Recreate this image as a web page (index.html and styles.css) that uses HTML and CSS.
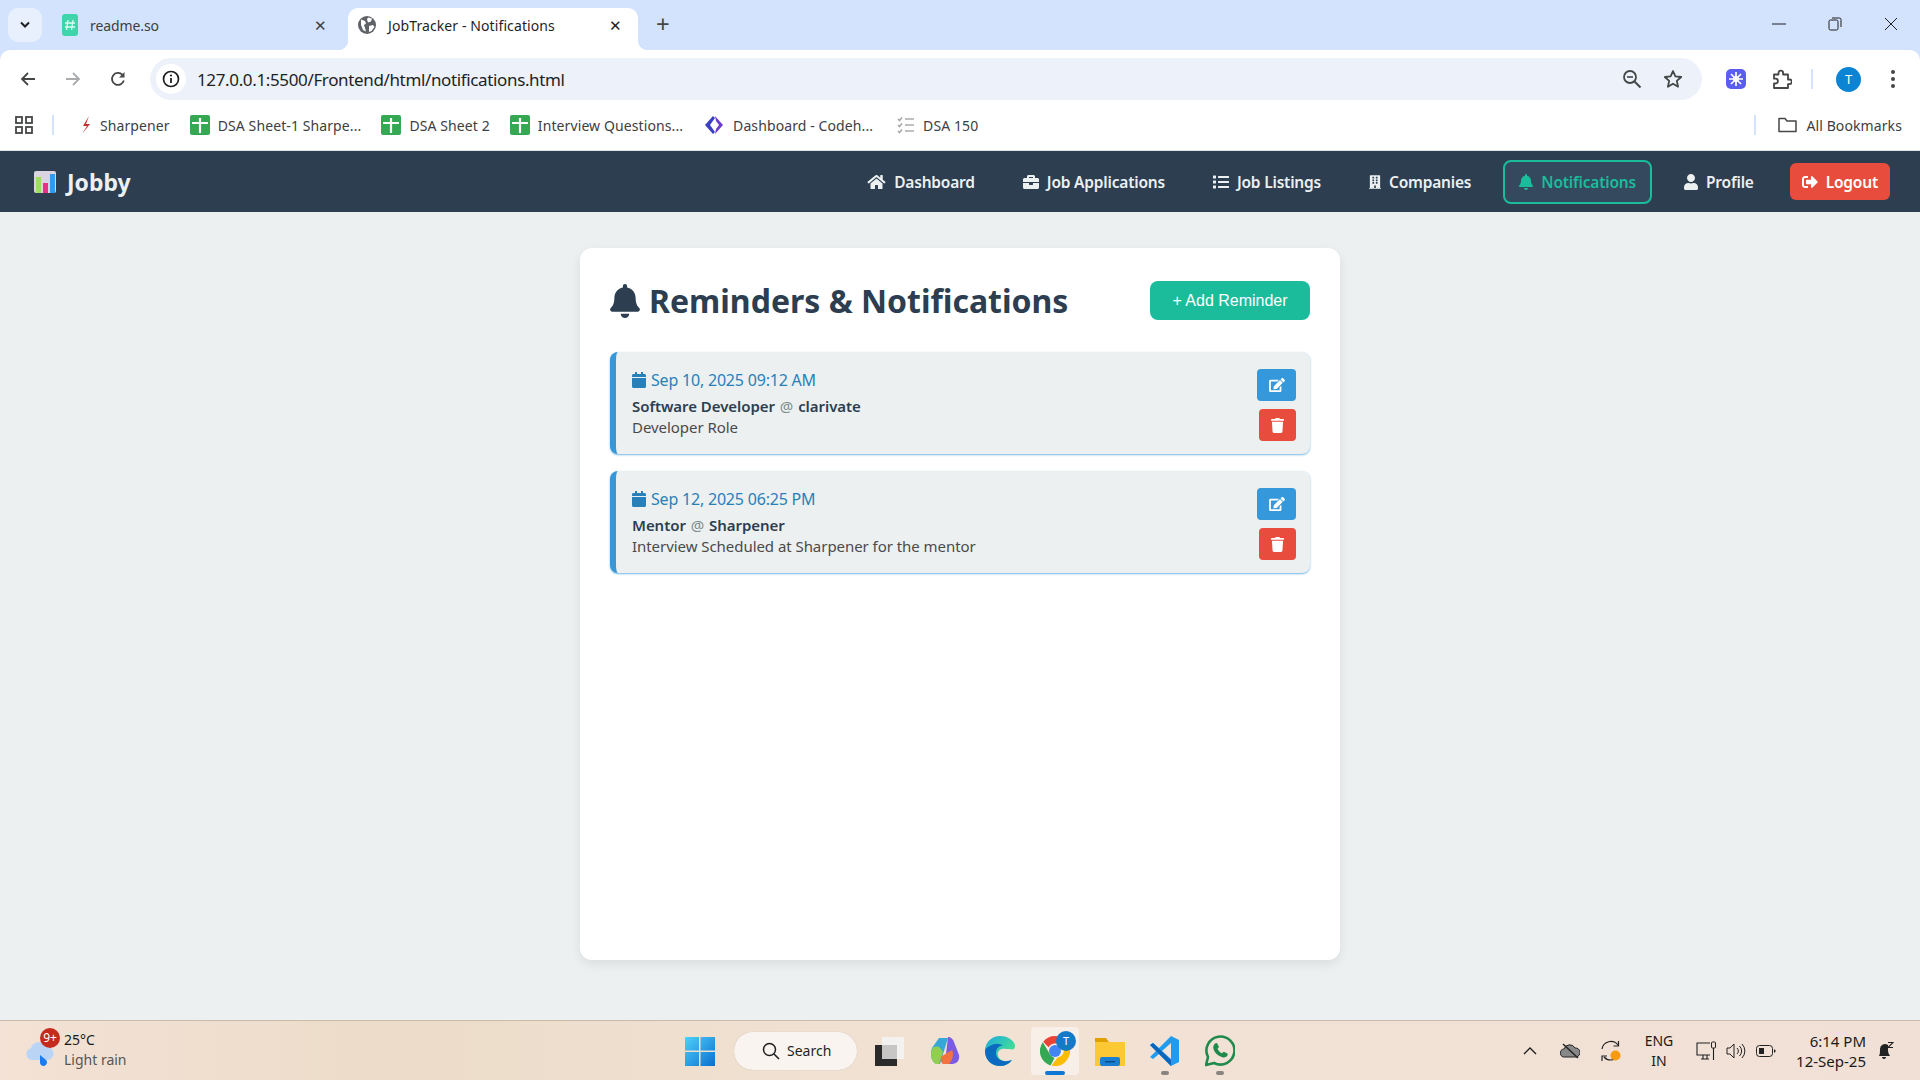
FILE: index.html
```html
<!DOCTYPE html>
<html lang="en">
<head>
    <meta charset="UTF-8">
    <title>JobTracker - Notifications</title>
    <link rel="stylesheet" href="styles.css">
</head>
<body>
    <svg class="defs" width="0" height="0">
        <symbol id="fa-bell" viewBox="0 0 448 512"><path d="M224 512c35.32 0 63.97-28.65 63.97-64H160.03c0 35.35 28.65 64 63.97 64zm215.39-149.71c-19.32-20.76-55.47-51.99-55.47-154.29 0-77.7-54.48-139.9-127.94-155.16V32c0-17.67-14.32-32-31.98-32s-31.98 14.33-31.98 32v20.84C118.56 68.1 64.08 130.3 64.08 208c0 102.3-36.15 133.53-55.47 154.29-6 6.45-8.66 14.16-8.61 21.71.11 16.4 12.98 32 32.1 32h383.8c19.12 0 32-15.6 32.1-32 .05-7.55-2.61-15.27-8.61-21.71z"/></symbol>
        <symbol id="fa-home" viewBox="0 0 576 512"><path d="M280.37 148.26L96 300.11V464a16 16 0 0 0 16 16l112.06-.29a16 16 0 0 0 15.92-16V368a16 16 0 0 1 16-16h64a16 16 0 0 1 16 16v95.64a16 16 0 0 0 16 16.05L464 480a16 16 0 0 0 16-16V300L295.67 148.26a12.19 12.19 0 0 0-15.3 0zM571.6 251.47L488 182.56V44.05a12 12 0 0 0-12-12h-56a12 12 0 0 0-12 12v72.61L318.47 43a48 48 0 0 0-61 0L4.34 251.47a12 12 0 0 0-1.6 16.9l25.5 31A12 12 0 0 0 45.15 301l235.22-193.74a12.19 12.19 0 0 1 15.3 0L530.9 301a12 12 0 0 0 16.9-1.6l25.5-31a12 12 0 0 0-1.7-16.93z"/></symbol>
        <symbol id="fa-briefcase" viewBox="0 0 512 512"><path d="M320 336c0 8.84-7.16 16-16 16h-96c-8.84 0-16-7.16-16-16v-48H0v144c0 25.6 22.4 48 48 48h416c25.6 0 48-22.4 48-48V288H320v48zm144-208h-80V80c0-25.6-22.4-48-48-48H176c-25.6 0-48 22.4-48 48v48H48c-25.6 0-48 22.4-48 48v80h512v-80c0-25.6-22.4-48-48-48zm-144 0H192V96h128v32z"/></symbol>
        <symbol id="fa-list" viewBox="0 0 512 512"><path d="M80 368H16a16 16 0 0 0-16 16v64a16 16 0 0 0 16 16h64a16 16 0 0 0 16-16v-64a16 16 0 0 0-16-16zm0-320H16A16 16 0 0 0 0 64v64a16 16 0 0 0 16 16h64a16 16 0 0 0 16-16V64a16 16 0 0 0-16-16zm0 160H16a16 16 0 0 0-16 16v64a16 16 0 0 0 16 16h64a16 16 0 0 0 16-16v-64a16 16 0 0 0-16-16zm416 176H176a16 16 0 0 0-16 16v32a16 16 0 0 0 16 16h320a16 16 0 0 0 16-16v-32a16 16 0 0 0-16-16zm0-320H176a16 16 0 0 0-16 16v32a16 16 0 0 0 16 16h320a16 16 0 0 0 16-16V80a16 16 0 0 0-16-16zm0 160H176a16 16 0 0 0-16 16v32a16 16 0 0 0 16 16h320a16 16 0 0 0 16-16v-32a16 16 0 0 0-16-16z"/></symbol>
        <symbol id="fa-building" viewBox="0 0 448 512"><path d="M436 480h-20V24c0-13.255-10.745-24-24-24H56C42.745 0 32 10.745 32 24v456H12c-6.627 0-12 5.373-12 12v20h448v-20c0-6.627-5.373-12-12-12zM128 76c0-6.627 5.373-12 12-12h40c6.627 0 12 5.373 12 12v40c0 6.627-5.373 12-12 12h-40c-6.627 0-12-5.373-12-12V76zm0 96c0-6.627 5.373-12 12-12h40c6.627 0 12 5.373 12 12v40c0 6.627-5.373 12-12 12h-40c-6.627 0-12-5.373-12-12v-40zm52 148h-40c-6.627 0-12-5.373-12-12v-40c0-6.627 5.373-12 12-12h40c6.627 0 12 5.373 12 12v40c0 6.627-5.373 12-12 12zm76 160h-64v-84c0-6.627 5.373-12 12-12h40c6.627 0 12 5.373 12 12v84zm64-172c0 6.627-5.373 12-12 12h-40c-6.627 0-12-5.373-12-12v-40c0-6.627 5.373-12 12-12h40c6.627 0 12 5.373 12 12v40zm0-96c0 6.627-5.373 12-12 12h-40c-6.627 0-12-5.373-12-12v-40c0-6.627 5.373-12 12-12h40c6.627 0 12 5.373 12 12v40zm0-96c0 6.627-5.373 12-12 12h-40c-6.627 0-12-5.373-12-12V76c0-6.627 5.373-12 12-12h40c6.627 0 12 5.373 12 12v40z"/></symbol>
        <symbol id="fa-user" viewBox="0 0 448 512"><path d="M224 256c70.7 0 128-57.3 128-128S294.7 0 224 0 96 57.3 96 128s57.3 128 128 128zm89.6 32h-16.7c-22.2 10.2-46.9 16-72.9 16s-50.6-5.8-72.9-16h-16.7C60.2 288 0 348.2 0 422.4V464c0 26.5 21.5 48 48 48h352c26.5 0 48-21.5 48-48v-41.6c0-74.2-60.2-134.4-134.4-134.4z"/></symbol>
        <symbol id="fa-logout" viewBox="0 0 512 512"><path d="M497 273L329 441c-15 15-41 4.5-41-17v-96H152c-13.3 0-24-10.7-24-24v-96c0-13.3 10.7-24 24-24h136V88c0-21.4 25.9-32 41-17l168 168c9.3 9.4 9.3 24.6 0 34zM192 436v-40c0-6.6-5.4-12-12-12H96c-17.7 0-32-14.3-32-32V160c0-17.7 14.3-32 32-32h84c6.6 0 12-5.4 12-12V76c0-6.6-5.4-12-12-12H96c-53 0-96 43-96 96v192c0 53 43 96 96 96h84c6.6 0 12-5.4 12-12z"/></symbol>
        <symbol id="fa-calendar" viewBox="0 0 448 512"><path d="M12 192h424c6.6 0 12 5.4 12 12v260c0 26.5-21.5 48-48 48H48c-26.5 0-48-21.5-48-48V204c0-6.6 5.4-12 12-12zm436-44v-36c0-26.5-21.5-48-48-48h-48V12c0-6.6-5.4-12-12-12h-40c-6.6 0-12 5.4-12 12v52H160V12c0-6.6-5.4-12-12-12h-40c-6.6 0-12 5.4-12 12v52H48C21.5 64 0 85.5 0 112v36c0 6.6 5.4 12 12 12h424c6.6 0 12-5.4 12-12z"/></symbol>
        <symbol id="fa-edit" viewBox="0 0 576 512"><path d="M402.6 83.2l90.2 90.2c3.8 3.8 3.8 10 0 13.8L274.4 405.6l-92.8 10.3c-12.4 1.4-22.9-9.1-21.5-21.5l10.3-92.8L388.8 83.2c3.8-3.8 10-3.8 13.8 0zm162-22.9l-48.8-48.8c-15.2-15.2-39.9-15.2-55.2 0l-35.4 35.4c-3.8 3.8-3.8 10 0 13.8l90.2 90.2c3.8 3.8 10 3.8 13.8 0l35.4-35.4c15.2-15.3 15.2-40 0-55.2zM384 346.2V448H64V128h229.8c3.2 0 6.2-1.3 8.5-3.5l40-40c7.6-7.6 2.2-20.5-8.5-20.5H48C21.5 64 0 85.5 0 112v352c0 26.5 21.5 48 48 48h352c26.5 0 48-21.5 48-48V306.2c0-10.7-12.9-16-20.5-8.5l-40 40c-2.2 2.3-3.5 5.3-3.5 8.5z"/></symbol>
        <symbol id="fa-trash" viewBox="0 0 448 512"><path d="M432 32H312l-9.4-18.7A24 24 0 0 0 281.1 0H166.8a23.72 23.72 0 0 0-21.4 13.3L136 32H16A16 16 0 0 0 0 48v32a16 16 0 0 0 16 16h416a16 16 0 0 0 16-16V48a16 16 0 0 0-16-16zM53.2 467a48 48 0 0 0 47.9 45h245.8a48 48 0 0 0 47.9-45L416 128H32z"/></symbol>
        <symbol id="sheet" viewBox="0 0 20 20"><rect width="20" height="20" rx="2" fill="#34a853"/><path d="M2 8h16M10 3v15" stroke="#fff" stroke-width="2.2" fill="none"/></symbol>
    </svg>

    <div class="browser-top">
        <div class="tabstrip">
            <div class="tab-menu"><svg width="12" height="8" viewBox="0 0 12 8"><path d="M2 1.500l4 4 4-4" stroke="#1f1f1f" stroke-width="2" fill="none"/></svg></div>
            <div class="tab tab-idle">
                <svg class="tab-icon" width="16" height="22" viewBox="0 0 16 22"><rect width="16" height="22" rx="3" fill="#3fd5ab"/><path d="M6 6l-1.500 10M11 6L9.500 16M3 9h10M3 13h10" stroke="#d9fff2" stroke-width="1.300"/></svg>
                <span class="tab-title">readme.so</span>
                <span class="tab-close">✕</span>
            </div>
            <div class="tab tab-active">
                <svg class="tab-icon" width="18" height="18" viewBox="0 0 18 18"><circle cx="9" cy="9" r="9" fill="#5f6368"/><path d="M3 3.500l4 1.500 1 2.500-2 1.500 1 3 1 3.500-3-1.500-2-5zM10 1.500l4 1-1 3-3 1-1-3zM11 10l4-1 1.500 2-3 4-2.500 1z" fill="#fff"/></svg>
                <span class="tab-title">JobTracker - Notifications</span>
                <span class="tab-close">✕</span>
            </div>
            <span class="tab-new">+</span>
            <div class="win-controls">
                <svg width="14" height="14" viewBox="0 0 14 14"><path d="M0 7h14" stroke="#1f1f1f" stroke-width="1"/></svg>
                <svg width="14" height="14" viewBox="0 0 14 14"><rect x="1" y="3" width="9" height="10" rx="1.500" fill="none" stroke="#1f1f1f"/><path d="M4 1h7.500a1.500 1.500 0 0 1 1.500 1.500V10" fill="none" stroke="#1f1f1f"/></svg>
                <svg width="14" height="14" viewBox="0 0 14 14"><path d="M1 1l12 12M13 1L1 13" stroke="#1f1f1f"/></svg>
            </div>
        </div>

        <div class="toolbar">
            <svg class="tool" width="16" height="16" viewBox="0 0 16 16"><path d="M15 8H2M8 2L2 8l6 6" fill="none" stroke="#444746" stroke-width="1.800"/></svg>
            <svg class="tool" width="16" height="16" viewBox="0 0 16 16"><path d="M1 8h13M8 2l6 6-6 6" fill="none" stroke="#a9abad" stroke-width="1.800"/></svg>
            <svg class="tool tool-last" width="16" height="16" viewBox="0 0 16 16"><path d="M13.800 9.500A6 6 0 1 1 12.300 3.700" fill="none" stroke="#444746" stroke-width="1.800"/><path d="M14.500 1v5.500H9z" fill="#444746"/></svg>
            <div class="omnibox">
                <span class="site-info"><svg width="18" height="18" viewBox="0 0 18 18"><circle cx="9" cy="9" r="7.500" fill="none" stroke="#1f1f1f" stroke-width="1.700"/><path d="M9 8v5" stroke="#1f1f1f" stroke-width="1.800"/><circle cx="9" cy="5.500" r="1.100" fill="#1f1f1f"/></svg></span>
                <span class="url">127.0.0.1:5500/Frontend/html/notifications.html</span>
                <svg class="zoom-out" width="20" height="20" viewBox="0 0 20 20"><circle cx="8" cy="8" r="6" fill="none" stroke="#444746" stroke-width="1.800"/><path d="M5 8h6" stroke="#444746" stroke-width="1.600"/><path d="M12.500 12.500l6 6" stroke="#444746" stroke-width="2"/></svg>
                <svg class="star" width="20" height="20" viewBox="0 0 20 20"><path d="M10 2l2.400 5.400 5.800.6-4.400 3.900 1.300 5.800L10 14.700l-5.100 3 1.300-5.800L1.800 8l5.800-.6z" fill="none" stroke="#444746" stroke-width="1.800" stroke-linejoin="round"/></svg>
            </div>
            <svg class="ext" width="20" height="20" viewBox="0 0 20 20"><rect width="20" height="20" rx="5" fill="#5b5ef0"/><path d="M10 3v14M3 10h14M5 5l10 10M15 5L5 15" stroke="#fff" stroke-width="1.700"/><circle cx="10" cy="10" r="3" fill="#fff"/></svg>
            <svg class="puzzle" width="20" height="20" viewBox="0 0 20 20"><path d="M2 5.500h4.500V4a2.300 2.300 0 0 1 4.600 0v1.500H16v5h1.500a2.300 2.300 0 0 1 0 4.600H16V19H2v-4.500h1.500a2.400 2.400 0 0 0 0-4.800H2z" fill="none" stroke="#444746" stroke-width="1.800" stroke-linejoin="round"/></svg>
            <span class="tool-sep"></span>
            <span class="avatar">T</span>
            <svg class="dots" width="4" height="18" viewBox="0 0 4 18"><circle cx="2" cy="2" r="2" fill="#444746"/><circle cx="2" cy="9" r="2" fill="#444746"/><circle cx="2" cy="16" r="2" fill="#444746"/></svg>
        </div>
    </div>

    <div class="bookmarks">
        <svg class="apps" width="18" height="18" viewBox="0 0 18 18"><g fill="none" stroke="#444746" stroke-width="1.800"><rect x="1" y="1" width="6" height="6"/><rect x="11" y="1" width="6" height="6"/><rect x="1" y="11" width="6" height="6"/><rect x="11" y="11" width="6" height="6"/></g></svg>
        <span class="bm-sep"></span>
        <span class="bm bm-sharp"><svg width="12" height="20" viewBox="0 0 12 20"><path d="M9 1L3 11h4L2 19l8-10H6z" fill="#c62f2f"/></svg>Sharpener</span>
        <span class="bm"><svg width="20" height="20"><use href="#sheet"/></svg>DSA Sheet-1 Sharpe...</span>
        <span class="bm"><svg width="20" height="20"><use href="#sheet"/></svg>DSA Sheet 2</span>
        <span class="bm"><svg width="20" height="20"><use href="#sheet"/></svg>Interview Questions...</span>
        <span class="bm bm-wide"><svg width="22" height="20" viewBox="0 0 22 20"><path d="M10 1L2 10l8 9 2-2-5-7 5-7z" fill="#3b3fc4"/><path d="M12 1l8 9-8 9 1-5 3-4-3-4z" fill="#6d3bd0"/></svg>Dashboard - Codeh...</span>
        <span class="bm"><svg width="18" height="18" viewBox="0 0 18 18"><path d="M1 3l1.500 1.500L5 1.500M1 9l1.500 1.500L5 7.500M1 15l1.500 1.500L5 13.500M8 3h9M8 9h9M8 15h9" fill="none" stroke="#aaa" stroke-width="1.700"/></svg>DSA 150</span>
        <span class="bm-all">
            <span class="bm-sep"></span>
            <svg width="19" height="16" viewBox="0 0 19 16"><path d="M1 14.500V1.500h6l2 2.500h9v10.500z" fill="none" stroke="#444746" stroke-width="1.500" stroke-linejoin="round"/></svg>
            All Bookmarks
        </span>
    </div>

    <nav class="navbar">
        <a class="logo">
            <svg width="22" height="22" viewBox="0 0 22 22"><rect width="22" height="22" rx="2" fill="#d9d4e0"/><rect x="2" y="6" width="5" height="16" fill="#9adf62"/><rect x="9" y="12" width="5" height="10" fill="#e9327f"/><rect x="16" y="3" width="5" height="19" fill="#2f9cf0"/></svg>
            Jobby
        </a>
        <div class="nav-links">
            <a class="nav-link"><svg class="ico-home"><use href="#fa-home"/></svg>Dashboard</a>
            <a class="nav-link"><svg class="ico-brief"><use href="#fa-briefcase"/></svg>Job Applications</a>
            <a class="nav-link"><svg class="ico-brief"><use href="#fa-list"/></svg>Job Listings</a>
            <a class="nav-link"><svg class="ico-build"><use href="#fa-building"/></svg>Companies</a>
            <a class="nav-link active"><svg class="ico-narrow"><use href="#fa-bell"/></svg>Notifications</a>
            <a class="nav-link"><svg class="ico-narrow"><use href="#fa-user"/></svg>Profile</a>
            <a class="logout"><svg class="ico-brief"><use href="#fa-logout"/></svg>Logout</a>
        </div>
    </nav>

    <main class="page">
        <section class="card">
            <header class="card-head">
                <h1><svg class="h1-bell"><use href="#fa-bell"/></svg>Reminders &amp; Notifications</h1>
                <button class="add-btn">+ Add Reminder</button>
            </header>

            <div class="reminder">
                <div class="rem-body">
                    <div class="rem-date"><svg class="ico-cal"><use href="#fa-calendar"/></svg>Sep 10, 2025 09:12 AM</div>
                    <div class="rem-job"><strong>Software Developer</strong> <span class="at">@</span> <strong>clarivate</strong></div>
                    <div class="rem-note">Developer Role</div>
                </div>
                <div class="rem-actions">
                    <button class="icon-btn edit"><svg class="ico-edit"><use href="#fa-edit"/></svg></button>
                    <button class="icon-btn del"><svg class="ico-del"><use href="#fa-trash"/></svg></button>
                </div>
            </div>

            <div class="reminder">
                <div class="rem-body">
                    <div class="rem-date"><svg class="ico-cal"><use href="#fa-calendar"/></svg>Sep 12, 2025 06:25 PM</div>
                    <div class="rem-job"><strong>Mentor</strong> <span class="at">@</span> <strong>Sharpener</strong></div>
                    <div class="rem-note">Interview Scheduled at Sharpener for the mentor</div>
                </div>
                <div class="rem-actions">
                    <button class="icon-btn edit"><svg class="ico-edit"><use href="#fa-edit"/></svg></button>
                    <button class="icon-btn del"><svg class="ico-del"><use href="#fa-trash"/></svg></button>
                </div>
            </div>
        </section>
    </main>

    <footer class="taskbar">
        <div class="tb-weather">
            <span class="weather-icon">
                <svg width="34" height="32" viewBox="0 0 32 32"><path d="M8 25a6 6 0 0 1-1-11.800A8 8 0 0 1 22 12a6.500 6.500 0 0 1 2 13z" fill="#b9d4f5"/><path d="M16 20l6 5a3.500 3.500 0 1 1-6 2z" fill="#1a7cf0"/></svg>
                <span class="badge">9+</span>
            </span>
            <div class="weather-text"><div class="temp">25°C</div><div class="cond">Light rain</div></div>
        </div>

        <div class="tb-center">
            <svg width="30" height="30" viewBox="0 0 30 30"><defs><linearGradient id="winblue" x1="0" y1="0" x2="1" y2="1"><stop offset="0" stop-color="#4fd0fb"/><stop offset="1" stop-color="#0a6fd0"/></linearGradient></defs><path d="M0 1h14v13.500H0zM15.500 1H30v13.500H15.500zM0 16h14v14H0zM15.500 16H30v14H15.500z" fill="url(#winblue)"/></svg>
            <div class="tb-search">
                <svg width="18" height="18" viewBox="0 0 18 18"><circle cx="7.500" cy="7.500" r="6" fill="none" stroke="#1f1f1f" stroke-width="1.500"/><path d="M12 12l5 5" stroke="#1f1f1f" stroke-width="1.600"/></svg>
                <span>Search</span>
            </div>
            <svg width="30" height="30" viewBox="0 0 30 30"><rect x="7" y="1" width="22" height="22" fill="#f4f2f0"/><rect x="0" y="9" width="22" height="21" fill="#2a2a2a"/><rect x="7" y="9" width="15" height="14" fill="#c8c6c4"/></svg>
            <svg width="30" height="30" viewBox="0 0 30 30"><path d="M9 2h9l-4 13-4 13H6C1 25 0 18 2 12z" fill="#35a7d8"/><path d="M18 1c3 0 5 2 6 5l5 13c1 5-2 9-7 9h-9l3-10z" fill="#7b5be0"/><path d="M2 13c2-3 6-3 8-1l3 4-4 12H6C1 25 0 19 2 13z" fill="#8fd14f"/><path d="M12 20l10-6c2 3 1 10-3 14h-6c-3-2-3-5-1-8z" fill="#f37340"/></svg>
            <svg width="30" height="30" viewBox="0 0 30 30"><defs><linearGradient id="edgeg" x1="0" y1="0" x2="1" y2="1"><stop offset="0" stop-color="#1fa8e0"/><stop offset=".6" stop-color="#3cd8a0"/><stop offset="1" stop-color="#60e070"/></linearGradient></defs><path d="M15 0C6 0 0 7 0 15c0 9 7 15 15 15 5 0 9-2 12-6-6 3-13 1-14-5-1-4 3-7 8-6 5 0 9 2 9-3C30 5 23 0 15 0z" fill="url(#edgeg)"/><path d="M0 15c0 9 7 15 15 15 5 0 9-2 12-6-8 3-16 0-16-7 0-5 4-8 7-7-3-3-9-3-13 0-3 1-5 3-5 5z" fill="#0c6bc0"/></svg>
            <div class="tb-chrome">
                <svg width="30" height="30" viewBox="0 0 30 30"><path d="M15 0a15 15 0 0 1 13 7.500H15A7.500 7.500 0 0 0 8.500 11.300L3.200 5.800A15 15 0 0 1 15 0z" fill="#ea4335"/><path d="M2.800 6.200l6.700 11.300a7.500 7.500 0 0 0 5 4.400L10.500 29.400A15 15 0 0 1 2.800 6.200z" fill="#34a853"/><path d="M28.200 8A15 15 0 0 1 11.500 29.600l6.300-8.300A7.500 7.500 0 0 0 21 8z" fill="#fbbc04"/><circle cx="15" cy="15" r="6" fill="#4285f4"/></svg>
                <span class="chrome-badge">T</span>
                <span class="tb-ind tb-ind-active"></span>
            </div>
            <svg width="30" height="30" viewBox="0 0 30 30"><path d="M0 2h11l3 4h16v4H0z" fill="#e0a100"/><rect y="6" width="30" height="24" fill="#fcc934"/><rect x="5" y="21" width="20" height="9" rx="2" fill="#1a7fd0"/><rect x="10" y="25" width="10" height="1.500" fill="#0b4e8a"/></svg>
            <div class="tb-app">
                <svg width="30" height="32" viewBox="0 0 30 32"><path d="M21 1l8 4v22l-8 4-12-12-6 5-3-2 6-6-6-6 3-2 6 5z" fill="#1f9cf0"/><path d="M21 8L12 16l9 8z" fill="#f2e4d8"/><path d="M0 10l3-2 18 17v6L6 16z" fill="#0a66b8"/></svg>
                <span class="tb-ind"></span>
            </div>
            <div class="tb-app">
                <svg width="30" height="32" viewBox="0 0 30 32"><path d="M1 30l2-8a14 14 0 1 1 6 6z" fill="none" stroke="#1f8a4c" stroke-width="2.600" stroke-linejoin="round"/><path d="M10 8.500l2-.5 2 4-1.500 1.800c1 2 2.500 3.500 4.500 4.500l1.800-1.500 4 2-.5 2c-1 1.500-3 2-5 1.500-5-1.500-8-5-9-9-.3-2 .5-3.500 1.700-4.800z" fill="#1f8a4c"/></svg>
                <span class="tb-ind"></span>
            </div>
        </div>

        <div class="tb-tray">
            <svg class="tray-chevron" width="14" height="8" viewBox="0 0 14 8"><path d="M1 7l6-6 6 6" fill="none" stroke="#1f1f1f" stroke-width="1.400"/></svg>
            <svg class="tray-cloud" width="20" height="16" viewBox="0 0 20 16"><path d="M5 14a4 4 0 0 1-1-8 6 6 0 0 1 11-1 4.500 4.500 0 0 1 1 9z" fill="#888" stroke="#222"/><path d="M3 1l15 14" stroke="#222" stroke-width="1.500"/></svg>
            <svg class="tray-sync" width="22" height="22" viewBox="0 0 22 22"><path d="M2 9a9 9 0 0 1 16-4M19 13a9 9 0 0 1-8 7 9 9 0 0 1-7-3" fill="none" stroke="#222" stroke-width="1.200"/><path d="M18.500 1v5h-5M2 21v-5h5" fill="none" stroke="#222" stroke-width="1.200"/><circle cx="15.500" cy="15.500" r="5" fill="#f79a0e"/></svg>
            <div class="tray-lang"><div>ENG</div><div>IN</div></div>
            <svg class="tray-net" width="20" height="20" viewBox="0 0 20 20"><path d="M14 2H1v12h13M5 18h8M7 14v4M11 14v4" fill="none" stroke="#222" stroke-width="1.100"/><rect x="15.500" y="1" width="4" height="6" rx="1" fill="none" stroke="#222"/><path d="M17.500 7v12" stroke="#222" stroke-width="1.100"/></svg>
            <svg class="tray-vol" width="20" height="16" viewBox="0 0 20 16"><path d="M1 5h3l4-4v14l-4-4H1zM11 5a4 4 0 0 1 0 6M13.500 3a7 7 0 0 1 0 10M16 1a10 10 0 0 1 0 14" fill="none" stroke="#222"/></svg>
            <svg class="tray-bat" width="20" height="12" viewBox="0 0 20 12"><rect x=".5" y=".5" width="16" height="11" rx="3" fill="none" stroke="#222"/><rect x="3" y="3" width="5" height="6" fill="#222"/><path d="M18 4v4l2-2z" fill="#222"/></svg>
            <div class="tray-clock"><div>6:14 PM</div><div>12-Sep-25</div></div>
            <svg class="tray-bell" width="18" height="20" viewBox="0 0 18 20"><path d="M3 15c1-2 1-4 1-7a5 5 0 0 1 8-4v5c0 3 1 4 2 6z" fill="#222"/><path d="M6 16h4a2 2 0 0 1-4 0z" fill="#222"/><path d="M12 1.500h5l-5 5h5" fill="none" stroke="#222" stroke-width="1.100"/></svg>
        </div>
    </footer>
</body>
</html>
```

FILE: styles.css
```css
* {
    box-sizing: border-box;
}

html, body {
    margin: 0;
    height: 100%;
}

body {
    display: flex;
    flex-direction: column;
    height: 1080px;
    overflow: hidden;
    font-family: "Noto Sans", "Open Sans", sans-serif;
    background: #ecf0f1;
    color: #1f1f1f;
}

.defs {
    position: absolute;
}

/* browser chrome */
.browser-top {
    flex: none;
    background: #d3e3fd;
}

.tabstrip {
    height: 50px;
    display: flex;
    align-items: flex-start;
}

.tab-menu {
    width: 34px;
    height: 34px;
    margin: 8px 0 0 8px;
    border-radius: 10px;
    background: #e9f0fd;
    display: flex;
    align-items: center;
    justify-content: center;
}

.tab {
    height: 42px;
    margin-top: 8px;
    display: flex;
    align-items: center;
    font-size: 14px;
    color: #3c4043;
}

.tab-idle {
    width: 306px;
    padding: 0 18px 8px 20px;
    letter-spacing: -0.1px;
}

.tab-active {
    position: relative;
    width: 290px;
    padding: 0 12px 8px 10px;
    background: #fff;
    border-radius: 10px 10px 0 0;
    color: #1f1f1f;
    letter-spacing: 0.1px;
}

/* the little flares at the foot of the active tab */
.tab-active::before, .tab-active::after {
    content: "";
    position: absolute;
    bottom: 0;
    width: 10px;
    height: 10px;
}

.tab-active::before {
    left: -10px;
    background: radial-gradient(circle at 0 0, transparent 10px, #fff 10.5px);
}

.tab-active::after {
    right: -10px;
    background: radial-gradient(circle at 100% 0, transparent 10px, #fff 10.5px);
}

.tab-icon {
    margin-right: 12px;
    flex: none;
}

.tab-title {
    flex: 1;
}

.tab-close {
    font-size: 15px;
    width: 20px;
    text-align: center;
}

.tab-new {
    margin: 6px 0 0 18px;
    font-size: 24px;
    line-height: 36px;
    color: #444746;
}

.win-controls {
    margin-left: auto;
    display: flex;
    gap: 42px;
    padding: 17px 22px 0 0;
}

.toolbar {
    height: 50px;
    display: flex;
    align-items: center;
    background: #fff;
    border-radius: 10px 10px 0 0;
    padding: 8px 0 0 20px;
}

.tool {
    margin-right: 29px;
}

.tool-last {
    margin-right: 24px;
}

.omnibox {
    width: 1552px;
    height: 42px;
    border-radius: 21px;
    background: #ecf1fa;
    display: flex;
    align-items: center;
    padding-left: 6px;
}

.site-info {
    width: 30px;
    height: 30px;
    border-radius: 50%;
    background: #fff;
    display: flex;
    align-items: center;
    justify-content: center;
}

.url {
    margin-left: 11px;
    font-size: 17px;
    letter-spacing: -0.36px;
    flex: 1;
}

.zoom-out {
    margin-right: 21px;
}

.star {
    margin-right: 19px;
}

.ext {
    margin-left: 24px;
}

.puzzle {
    margin-left: 26px;
}

.tool-sep {
    width: 2px;
    height: 20px;
    background: #d3e3fd;
    margin: 0 23px 0 19px;
}

.avatar {
    width: 25px;
    height: 25px;
    border-radius: 50%;
    background: #0b84d4;
    color: #fff;
    font-size: 13px;
    text-align: center;
    line-height: 25px;
}

.dots {
    margin-left: 30px;
}

.bookmarks {
    height: 51px;
    flex: none;
    display: flex;
    align-items: center;
    background: #fff;
    padding-left: 15px;
    border-bottom: 1px solid #dfe1e5;
    font-size: 14px;
    letter-spacing: 0.1px;
    color: #3c4043;
}

.bm-sep {
    width: 2px;
    height: 20px;
    background: #d3e3fd;
    margin: 0 17px 0 19px;
}

.bm {
    display: flex;
    align-items: center;
    gap: 8px;
    margin-right: 20px;
}

.bm-wide {
    margin-right: 24px;
}

.bm-sharp {
    margin-left: 9px;
}

.bm-all {
    margin-left: auto;
    display: flex;
    align-items: center;
    padding-right: 18px;
    gap: 9px;
}

.bm-all .bm-sep {
    margin: 0 13px 0 0;
}

/* app navbar */
.navbar {
    height: 61px;
    flex: none;
    display: flex;
    align-items: center;
    justify-content: space-between;
    padding: 0 30px 0 34px;
    background: #2c3e50;
    color: #ecf0f1;
}

.logo {
    display: flex;
    align-items: center;
    gap: 11px;
    font-size: 23px;
    font-weight: 700;
}

.nav-links {
    display: flex;
    align-items: center;
    gap: 16px;
}

.nav-link {
    display: flex;
    align-items: center;
    gap: 8px;
    padding: 8px 14px;
    height: 44px;
    border: 2px solid transparent;
    border-radius: 8px;
    font-size: 15.500px;
    font-weight: 600;
    letter-spacing: -0.2px;
}

.nav-link svg, .logout svg {
    fill: currentColor;
    height: 16px;
}

.ico-home {
    width: 19px;
}

.ico-brief {
    width: 16px;
}

.ico-narrow {
    width: 14px;
}

.ico-build {
    width: 12px;
}

.nav-link.active {
    color: #1abc9c;
    border-color: #1abc9c;
    background: #34495e;
}

.logout {
    display: flex;
    align-items: center;
    gap: 8px;
    height: 37px;
    margin-left: 4px;
    padding: 0 12px;
    border-radius: 6px;
    background: #e74c3c;
    color: #fff;
    font-size: 15.500px;
    font-weight: 600;
    letter-spacing: -0.2px;
}

/* page */
.page {
    flex: 1;
    display: flex;
    justify-content: center;
    padding-top: 36px;
}

.card {
    width: 760px;
    height: 712px;
    padding: 33px 30px;
    background: #fff;
    border-radius: 12px;
    box-shadow: 0 4px 12px rgba(0, 0, 0, 0.08);
}

.card-head {
    display: flex;
    align-items: center;
    justify-content: space-between;
    margin-bottom: 32px;
    height: 39px;
}

h1 {
    margin: 0;
    display: flex;
    align-items: center;
    gap: 9px;
    font-size: 32px;
    font-weight: 700;
    color: #2c3e50;
}

.h1-bell {
    width: 30px;
    height: 34px;
    fill: #2c3e50;
}

.add-btn {
    width: 160px;
    height: 39px;
    border: 0;
    border-radius: 8px;
    background: #1abc9c;
    color: #fff;
    font-family: "Liberation Sans", sans-serif;
    font-size: 16px;
}

.reminder {
    height: 102px;
    margin-bottom: 17px;
    display: flex;
    justify-content: space-between;
    background: #ecf0f1;
    border-left: 6px solid #3498db;
    border-radius: 8px;
    box-shadow: 0 1px 2px rgba(52, 152, 219, 0.7);
    padding: 17px 14px 0 16px;
}

.rem-date {
    display: flex;
    align-items: center;
    gap: 5px;
    font-size: 16px;
    line-height: 22px;
    letter-spacing: -0.2px;
    color: #2980b9;
}

.ico-cal {
    width: 14px;
    height: 16px;
    fill: #2980b9;
}

.rem-job {
    margin-top: 5px;
    font-size: 15px;
    line-height: 21px;
    letter-spacing: -0.05px;
    color: #7f8c8d;
}

.rem-job strong {
    font-weight: 600;
    color: #2c3e50;
}

.at {
    margin: 0 1px;
}

.rem-note {
    font-size: 15px;
    line-height: 21px;
    letter-spacing: -0.05px;
    color: #4a4a4a;
}

.rem-actions {
    display: flex;
    flex-direction: column;
    align-items: flex-end;
    gap: 8px;
}

.icon-btn {
    height: 32px;
    border: 0;
    border-radius: 4px;
    display: flex;
    align-items: center;
    justify-content: center;
    color: #fff;
    fill: #fff;
    padding: 0;
}

.icon-btn.edit {
    width: 39px;
    background: #3498db;
}

.icon-btn.del {
    width: 37px;
    background: #e74c3c;
}

.ico-edit {
    width: 16px;
    height: 14px;
}

.ico-del {
    width: 13px;
    height: 15px;
}

/* windows taskbar */
.taskbar {
    height: 60px;
    flex: none;
    display: grid;
    grid-template-columns: 1fr auto 1fr;
    align-items: center;
    background: linear-gradient(90deg, #f3e2d5, #ecdcc9 20%, #f2e2d4 50%, #f1e0d6);
    border-top: 1px solid #c8bcb0;
}

.tb-weather {
    display: flex;
    align-items: center;
    padding-left: 23px;
    gap: 7px;
}

.weather-icon {
    position: relative;
    width: 34px;
    height: 32px;
}

.weather-text {
    margin-top: -2px;
}

.badge {
    position: absolute;
    top: -7px;
    right: -3px;
    width: 20px;
    height: 20px;
    border-radius: 50%;
    background: #c42b1c;
    color: #fff;
    font-size: 12px;
    line-height: 20px;
    text-align: center;
}

.temp, .tray-lang {
    font-size: 14px;
    line-height: 20px;
    color: #1a1a1a;
}

.tray-clock {
    font-size: 15px;
    line-height: 20px;
    color: #1a1a1a;
}

.cond {
    font-size: 14px;
    line-height: 20px;
    color: #555;
}

.tb-center {
    display: flex;
    align-items: center;
    gap: 25px;
}

.tb-search {
    width: 123px;
    height: 38px;
    margin: 0 -7px 0 -6px;
    border-radius: 19px;
    background: #f9f4f0;
    display: flex;
    align-items: center;
    padding-left: 28px;
    gap: 7px;
    font-size: 14px;
    box-shadow: 0 0 1px rgba(0, 0, 0, 0.2);
}

.tb-chrome {
    position: relative;
    width: 48px;
    height: 48px;
    margin: 0 -9px 0 -9px;
    border-radius: 4px;
    background: #f8efe8;
    display: flex;
    align-items: center;
    justify-content: center;
}

.chrome-badge {
    position: absolute;
    top: 4px;
    right: 3px;
    width: 20px;
    height: 20px;
    border-radius: 50%;
    background: #1479c9;
    color: #fff;
    font-size: 11px;
    line-height: 20px;
    text-align: center;
}

.tb-app {
    position: relative;
    height: 32px;
}

.tb-ind {
    position: absolute;
    left: 50%;
    bottom: -8px;
    width: 8px;
    height: 4px;
    margin-left: -4px;
    border-radius: 2px;
    background: #8a8480;
}

.tb-ind-active {
    width: 20px;
    margin-left: -10px;
    bottom: 0;
    background: #0f78d4;
}

.tb-tray {
    display: flex;
    align-items: center;
    justify-content: flex-end;
    padding-right: 26px;
}

.tray-chevron {
    margin-right: 23px;
}

.tray-cloud {
    margin-right: 20px;
}

.tray-sync {
    margin-right: 20px;
}

.tray-lang {
    width: 34px;
    text-align: center;
    margin-right: 20px;
}

.tray-net {
    margin-right: 10px;
}

.tray-vol {
    margin-right: 10px;
}

.tray-clock {
    width: 90px;
    text-align: right;
    margin-right: 10px;
}
```
